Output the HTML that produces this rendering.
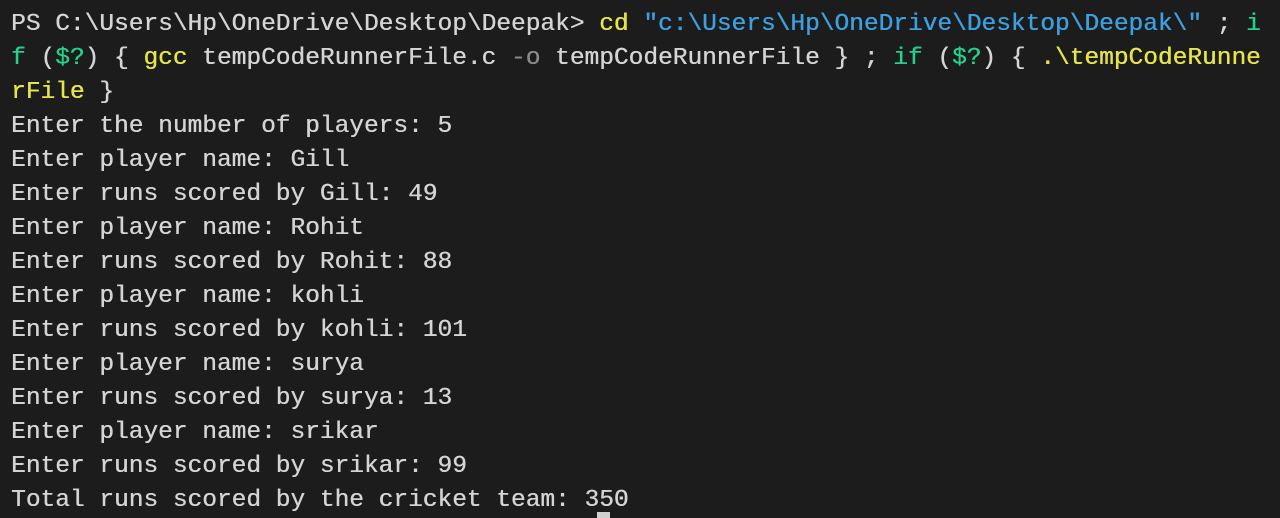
<!DOCTYPE html>
<html><head><style>
html,body{margin:0;padding:0;background:#1c1c1c;width:1280px;height:518px;overflow:hidden}
pre{margin:0;position:absolute;left:11px;top:8px;font-family:"Liberation Mono",monospace;font-size:24.5px;line-height:34px;color:#d4d4d4;white-space:pre;text-shadow:0.4px 0 0 currentColor}
.y{color:#e5e54a}.g{color:#23d18b}.b{color:#3ba0e0}.d{color:#8a8a8a}
.cur{position:absolute;left:597px;top:512px;width:13px;height:6px;background:#d0d0d0}
</style></head><body>
<pre>PS C:\Users\Hp\OneDrive\Desktop\Deepak&gt; <span class="y">cd</span> <span class="b">"c:\Users\Hp\OneDrive\Desktop\Deepak\"</span> ; <span class="g">i</span>
<span class="g">f</span> (<span class="g">$?</span>) { <span class="y">gcc</span> tempCodeRunnerFile.c <span class="d">-o</span> tempCodeRunnerFile } ; <span class="g">if</span> (<span class="g">$?</span>) { <span class="y">.\tempCodeRunne</span>
<span class="y">rFile</span> }
Enter the number of players: 5
Enter player name: Gill
Enter runs scored by Gill: 49
Enter player name: Rohit
Enter runs scored by Rohit: 88
Enter player name: kohli
Enter runs scored by kohli: 101
Enter player name: surya
Enter runs scored by surya: 13
Enter player name: srikar
Enter runs scored by srikar: 99
Total runs scored by the cricket team: 350</pre>
<div class="cur"></div>
</body></html>
